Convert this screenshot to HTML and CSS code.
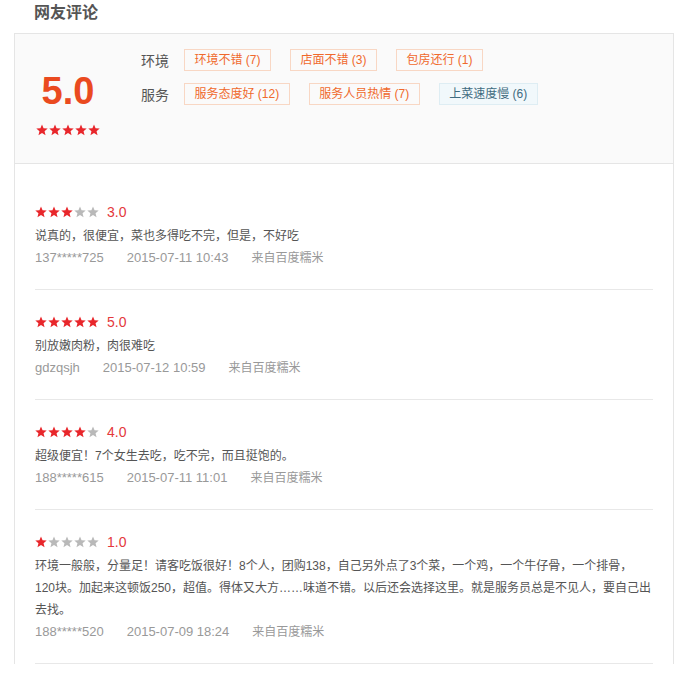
FILE: index.html
```html
<!DOCTYPE html>
<html lang="zh-CN">
<head>
    <meta charset="UTF-8">
    <meta name="viewport" content="width=device-width, initial-scale=1.0">
    <title>网友评论</title>
    <link rel="stylesheet" href="styles.css">
</head>
<body>
    <svg width="0" height="0" class="defs">
        <symbol id="star" viewBox="0 0 12 12">
            <polygon points="6,0.4 7.55,4.2 11.7,4.5 8.55,7.2 9.55,11.3 6,9.1 2.45,11.3 3.45,7.2 0.3,4.5 4.45,4.2"/>
        </symbol>
    </svg>

    <div class="wrap">
        <h2 class="title">网友评论</h2>

        <div class="box">
            <!-- Summary: overall score and tags -->
            <div class="summary">
                <div class="score">
                    <div class="score-num">5.0</div>
                    <div class="stars">
                        <svg class="on"><use href="#star"/></svg><svg class="on"><use href="#star"/></svg><svg class="on"><use href="#star"/></svg><svg class="on"><use href="#star"/></svg><svg class="on"><use href="#star"/></svg>
                    </div>
                </div>
                <div class="tags">
                    <div class="tag-row">
                        <span class="tag-label">环境</span>
                        <span class="tag">环境不错 (7)</span>
                        <span class="tag">店面不错 (3)</span>
                        <span class="tag">包房还行 (1)</span>
                    </div>
                    <div class="tag-row">
                        <span class="tag-label">服务</span>
                        <span class="tag">服务态度好 (12)</span>
                        <span class="tag">服务人员热情 (7)</span>
                        <span class="tag tag-bad">上菜速度慢 (6)</span>
                    </div>
                </div>
            </div>

            <!-- Review list -->
            <ul class="reviews">
                <li class="review">
                    <div class="rate">
                        <span class="stars">
                            <svg class="on"><use href="#star"/></svg><svg class="on"><use href="#star"/></svg><svg class="on"><use href="#star"/></svg><svg><use href="#star"/></svg><svg><use href="#star"/></svg>
                        </span>
                        <span class="rate-num">3.0</span>
                    </div>
                    <p class="text">说真的，很便宜，菜也多得吃不完，但是，不好吃</p>
                    <div class="meta"><span>137*****725</span><span>2015-07-11 10:43</span><span class="src">来自百度糯米</span></div>
                </li>
                <li class="review">
                    <div class="rate">
                        <span class="stars">
                            <svg class="on"><use href="#star"/></svg><svg class="on"><use href="#star"/></svg><svg class="on"><use href="#star"/></svg><svg class="on"><use href="#star"/></svg><svg class="on"><use href="#star"/></svg>
                        </span>
                        <span class="rate-num">5.0</span>
                    </div>
                    <p class="text">别放嫩肉粉，肉很难吃</p>
                    <div class="meta"><span>gdzqsjh</span><span>2015-07-12 10:59</span><span class="src">来自百度糯米</span></div>
                </li>
                <li class="review">
                    <div class="rate">
                        <span class="stars">
                            <svg class="on"><use href="#star"/></svg><svg class="on"><use href="#star"/></svg><svg class="on"><use href="#star"/></svg><svg class="on"><use href="#star"/></svg><svg><use href="#star"/></svg>
                        </span>
                        <span class="rate-num">4.0</span>
                    </div>
                    <p class="text">超级便宜！7个女生去吃，吃不完，而且挺饱的。</p>
                    <div class="meta"><span>188*****615</span><span>2015-07-11 11:01</span><span class="src">来自百度糯米</span></div>
                </li>
                <li class="review">
                    <div class="rate">
                        <span class="stars">
                            <svg class="on"><use href="#star"/></svg><svg><use href="#star"/></svg><svg><use href="#star"/></svg><svg><use href="#star"/></svg><svg><use href="#star"/></svg>
                        </span>
                        <span class="rate-num">1.0</span>
                    </div>
                    <p class="text">环境一般般，分量足！请客吃饭很好！8个人，团购138，自己另外点了3个菜，一个鸡，一个牛仔骨，一个排骨，120块。加起来这顿饭250，超值。得体又大方……味道不错。以后还会选择这里。就是服务员总是不见人，要自己出去找。</p>
                    <div class="meta"><span>188*****520</span><span>2015-07-09 18:24</span><span class="src">来自百度糯米</span></div>
                </li>
            </ul>
        </div>
    </div>
</body>
</html>
```

FILE: styles.css
```css
body {
    margin: 0;
    background-color: #fff;
    font-family: "Liberation Sans", Arial, "Noto Sans CJK SC", sans-serif;
    color: #555;
}
.defs {
    position: absolute;
}
.wrap {
    margin-left: 14px;
    width: 660px;
}
.title {
    margin: 0;
    padding-left: 20px;
    height: 33px;
    line-height: 26px;
    font-size: 16px;
    font-weight: bold;
    color: #555;
}
.box {
    border: 1px solid #e5e5e5;
    border-bottom: none;
}

/* summary block */
.summary {
    display: flex;
    height: 130px;
    background-color: #fafafa;
    border-bottom: 1px solid #e5e5e5;
    box-sizing: border-box;
}
.score {
    width: 106px;
    text-align: center;
    padding-top: 38px;
}
.score-num {
    font-size: 38px;
    font-weight: bold;
    line-height: 38px;
    color: #ea4a1f;
}
.score .stars {
    margin-top: 14px;
}
.stars {
    display: inline-flex;
    gap: 1px;
}
.stars svg {
    width: 12px;
    height: 12px;
    fill: #b9b9b9;
}
.stars svg.on {
    fill: #e8262b;
}
.tags {
    margin-left: 20px;
    padding-top: 15px;
    display: flex;
    flex-direction: column;
    gap: 12px;
}
.tag-row {
    display: flex;
    align-items: center;
}
.tag-label {
    font-size: 14px;
    width: 43px;
    color: #555;
}
.tag {
    font-size: 12px;
    line-height: 20px;
    padding: 0 9.5px;
    border: 1px solid #f8d7c4;
    color: #f0692c;
    margin-right: 19px;
}
.tag-bad {
    background-color: #f1f8fb;
    border-color: #deedf3;
    color: #3f6b80;
}

/* review list */
.reviews {
    list-style: none;
    margin: 0;
    padding: 16px 20px 0;
}
.review {
    padding: 22px 0 20px;
    border-bottom: 1px solid #e8e8e8;
}
.rate {
    display: flex;
    align-items: center;
    height: 20px;
    margin-bottom: 3px;
}
.rate-num {
    margin-left: 8px;
    font-size: 14px;
    color: #e4393c;
}
.text {
    margin: 0;
    padding-right: 1.5px;
    font-size: 12px;
    line-height: 22px;
    color: #555;
}
.meta {
    display: flex;
    gap: 23px;
    font-size: 13px;
    line-height: 22px;
    color: #999;
}
.meta .src {
    font-size: 12px;
}
```
